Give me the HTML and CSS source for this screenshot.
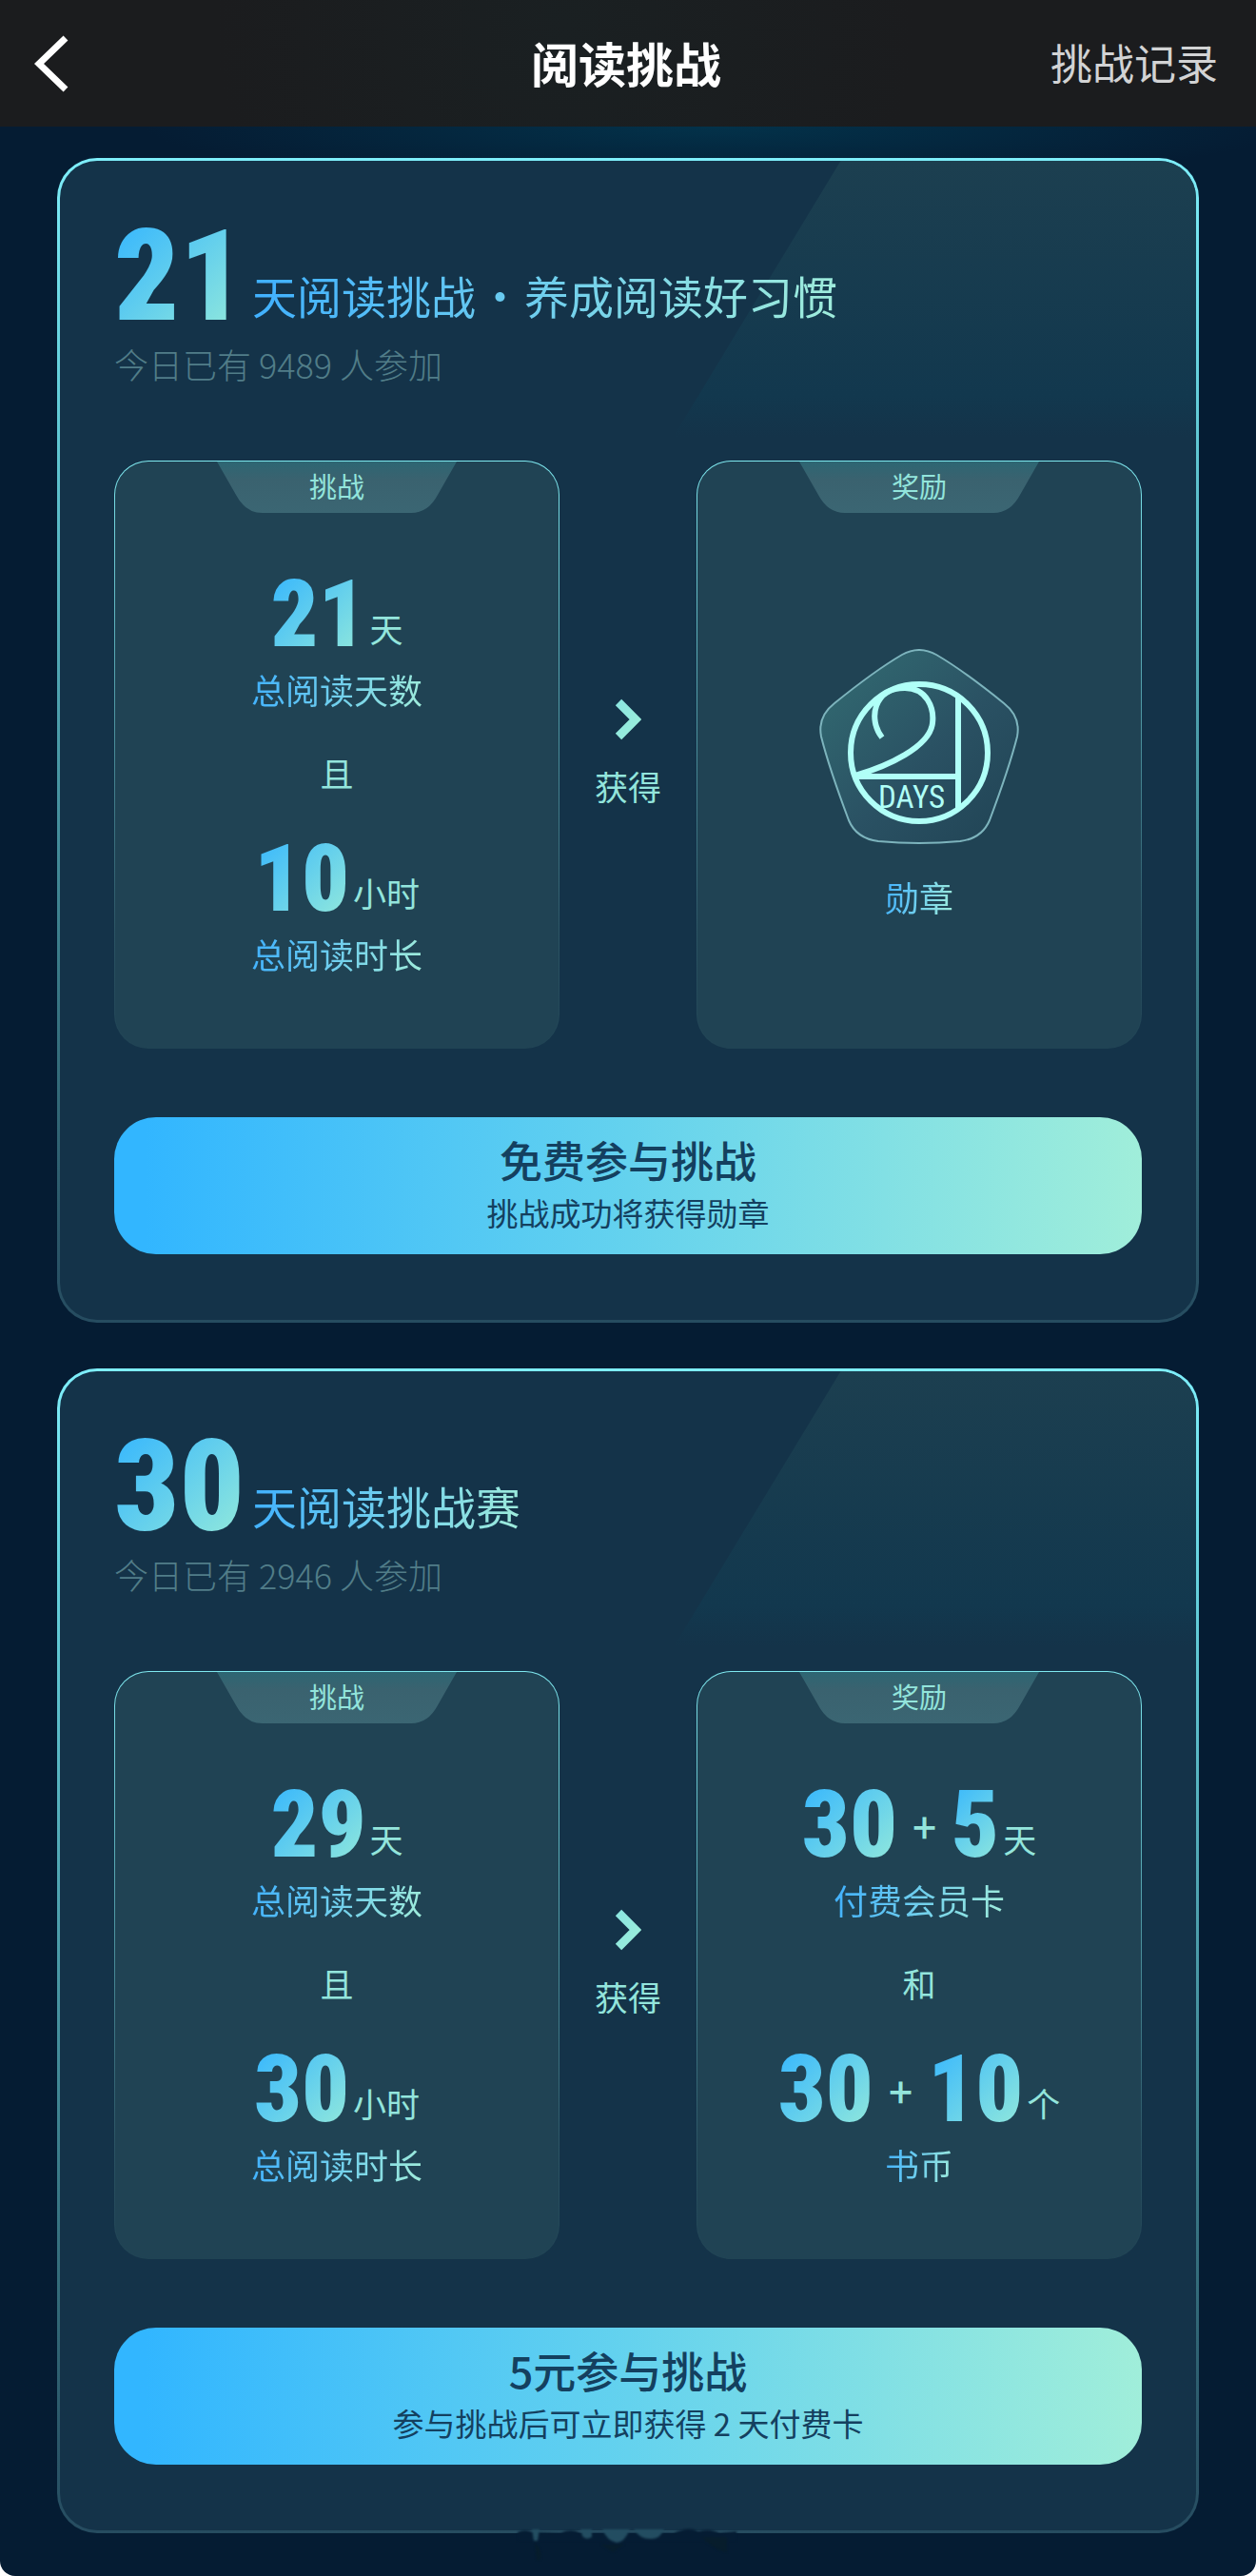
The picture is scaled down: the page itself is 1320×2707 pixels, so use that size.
FILE: index.html
```html
<!DOCTYPE html>
<html lang="zh-CN">
<head>
  <meta charset="UTF-8">
  <meta name="viewport" content="width=device-width, initial-scale=1.0">
  <title>阅读挑战</title>
  <link rel="stylesheet" href="styles.css">
</head>
<body>
  <div class="page">
    <header class="navbar">
      <button class="back" type="button" aria-label="返回">
        <svg width="38" height="62" viewBox="0 0 38 62"><path d="M33 4 L5 31 L33 58" fill="none" stroke="#fff" stroke-width="7"/></svg>
      </button>
      <h1>阅读挑战</h1>
      <a class="record" href="#">挑战记录</a>
    </header>

    <main class="list">
      <section class="card">
        <h2 class="card-title"><span class="num num-lg">21</span><span class="title-text">天阅读挑战<span class="dot">·</span>养成阅读好习惯</span></h2>
        <p class="joined">今日已有 9489 人参加</p>

        <div class="row">
          <div class="box">
            <div class="tab"><svg viewBox="0 0 252 54"><path d="M0 0H252L232 35Q222 54 204 54H48Q30 54 20 35Z" fill="url(#tabFill)"/></svg><span>挑战</span></div>
            <div class="stat"><span class="num">21</span><span class="unit">天</span></div>
            <p class="label"><span>总阅读天数</span></p>
            <p class="and">且</p>
            <div class="stat"><span class="num">10</span><span class="unit">小时</span></div>
            <p class="label"><span>总阅读时长</span></p>
          </div>

          <div class="get">
            <svg width="28" height="44" viewBox="0 0 28 44"><path d="M4 4L22 22L4 40" fill="none" stroke="url(#mint)" stroke-width="9"/></svg>
            <span>获得</span>
          </div>

          <div class="box">
            <div class="tab"><svg viewBox="0 0 252 54"><path d="M0 0H252L232 35Q222 54 204 54H48Q30 54 20 35Z" fill="url(#tabFill)"/></svg><span>奖励</span></div>
            <div class="medal">
              <svg width="210" height="206" viewBox="0 0 210 206">
                <path d="M87 6Q105 -4 123 6C147 20 173 40 194 57Q212 71 208 92C201 120 188 156 179 180Q171 199 148 202Q105 206 62 202Q39 199 31 180C22 156 9 120 2 92Q-2 71 16 57C37 40 63 20 87 6Z" fill="url(#medalFill)" stroke="#7db4bd" stroke-width="2"/>
                <g fill="none" stroke="#b0fff7" stroke-width="6">
                  <circle cx="105" cy="109" r="72"/>
                  <path d="M146 50V168"/>
                  <path d="M38 134H146"/>
                  <path d="M66 93C51 74 57 41 90 41C113 41 121 62 119 78C116 103 72 123 38 133"/>
                </g>
                <text class="days" x="62" y="167">DAYS</text>
              </svg>
              <p class="label"><span>勋章</span></p>
            </div>
          </div>
        </div>

        <button class="join" type="button"><strong>免费参与挑战</strong><small>挑战成功将获得勋章</small></button>
      </section>

      <section class="card">
        <h2 class="card-title"><span class="num num-lg">30</span><span class="title-text">天阅读挑战赛</span></h2>
        <p class="joined">今日已有 2946 人参加</p>

        <div class="row">
          <div class="box">
            <div class="tab"><svg viewBox="0 0 252 54"><path d="M0 0H252L232 35Q222 54 204 54H48Q30 54 20 35Z" fill="url(#tabFill)"/></svg><span>挑战</span></div>
            <div class="stat"><span class="num">29</span><span class="unit">天</span></div>
            <p class="label"><span>总阅读天数</span></p>
            <p class="and">且</p>
            <div class="stat"><span class="num">30</span><span class="unit">小时</span></div>
            <p class="label"><span>总阅读时长</span></p>
          </div>

          <div class="get">
            <svg width="28" height="44" viewBox="0 0 28 44"><path d="M4 4L22 22L4 40" fill="none" stroke="url(#mint)" stroke-width="9"/></svg>
            <span>获得</span>
          </div>

          <div class="box">
            <div class="tab"><svg viewBox="0 0 252 54"><path d="M0 0H252L232 35Q222 54 204 54H48Q30 54 20 35Z" fill="url(#tabFill)"/></svg><span>奖励</span></div>
            <div class="stat"><span class="num">30</span><span class="plus">+</span><span class="num">5</span><span class="unit">天</span></div>
            <p class="label"><span>付费会员卡</span></p>
            <p class="and">和</p>
            <div class="stat"><span class="num">30</span><span class="plus">+</span><span class="num">10</span><span class="unit">个</span></div>
            <p class="label"><span>书币</span></p>
          </div>
        </div>

        <button class="join" type="button"><strong>5元参与挑战</strong><small>参与挑战后可立即获得 2 天付费卡</small></button>
      </section>

      <!-- 底部残影 -->
      <svg class="smudge" width="230" height="50" viewBox="0 0 230 50" aria-hidden="true">
        <path d="M0 11Q8 7 15 11L45 12Q56 6 66 12H164Q180 4 190 10Q202 6 212 12L230 10V20H0Z" fill="#051c33"/>
        <path d="M15 8H23L21 20H17ZM66 8H78V16Q72 20 68 15ZM89 8H118Q112 22 104 22Q94 20 89 8ZM122 8H154Q150 18 140 18Q128 18 122 8Z" fill="#234d61"/>
        <path d="M18 22Q26 28 24 40L20 40ZM88 24H112L100 32ZM194 16H220V32Q206 30 194 16Z" fill="#071d2c"/>
      </svg>
    </main>
  </div>

  <!-- 公用渐变 -->
  <svg class="defs" width="0" height="0" aria-hidden="true">
    <defs>
      <linearGradient id="tabFill" x1="0" y1="0" x2="0" y2="1"><stop offset="0" stop-color="#2d6673"/><stop offset=".35" stop-color="#3a626f"/><stop offset="1" stop-color="#3b6673"/></linearGradient>
      <linearGradient id="mint" x1="0" y1="0" x2="1" y2="1"><stop offset="0" stop-color="#8ce6e0"/><stop offset="1" stop-color="#9aeedb"/></linearGradient>
      <linearGradient id="medalFill" x1="0" y1="0" x2="1" y2="1"><stop offset="0" stop-color="#336d73"/><stop offset=".55" stop-color="#2a5163"/><stop offset="1" stop-color="#204354"/></linearGradient>
    </defs>
  </svg>
</body>
</html>
```

FILE: styles.css
```css
* { box-sizing: border-box; margin: 0; padding: 0; }
html { background: #fff; }
body { font-family: "Noto Sans CJK SC", sans-serif; font-size: 35px; line-height: 40px; color: #93e5dc; }
button { border: 0; background: none; font-family: inherit; cursor: pointer; }
p, h1, h2 { font-weight: 400; }

.page { background: #051c33; border-radius: 0 0 16px 16px; overflow: hidden; }

/* 顶部导航 */
.navbar { display: grid; grid-template-columns: 1fr auto 1fr; align-items: center; height: 133px; padding: 0 40px 0 36px; background: radial-gradient(circle at 45% 20%, #1a2022, #1b1c1e 50%); }
.back { display: flex; justify-self: start; }
.navbar h1 { padding-bottom: 4px; font-size: 50px; line-height: 60px; font-weight: 700; color: #fff; }
.record { justify-self: end; padding-bottom: 4px; font-size: 44px; line-height: 60px; color: #d2d3d4; text-decoration: none; }

.list { position: relative; display: flex; flex-direction: column; gap: 48px; padding: 33px 60px 45px; background: radial-gradient(ellipse 600px 60px at 57% 0, #03324a, transparent); }

/* 挑战卡片 */
.card { position: relative; padding: 57px 57px 69px; border: 3px solid transparent; border-radius: 42px; background: linear-gradient(#143349, #143349) padding-box, linear-gradient(#7eeefa, #64cfdb 20%, #36717f 75%, #264c60) border-box; }
.card::before { content: ""; position: absolute; top: 0; right: 0; width: 46%; height: 290px; border-radius: 0 39px 0 0; clip-path: polygon(32% 0, 100% 0, 100% 100%, 0 100%); background: linear-gradient(#1c3f50, #12384e 85%, #143349); }
.card > * { position: relative; }

.num { font-family: "Liberation Sans Narrow", "Roboto Condensed", "Liberation Sans", sans-serif; font-size: 98px; line-height: 100px; font-weight: 900; }
.num-lg { font-size: 134px; line-height: 130px; }
.num, .title-text, .label span { color: transparent; background: linear-gradient(135deg, #32b4ff, #98ecd9); background-clip: text; -webkit-background-clip: text; }
.title-text, .label span { background-image: linear-gradient(100deg, #3fb0ff, #a0eddb); }

.card-title { display: flex; align-items: flex-end; gap: 8px; height: 130px; }
.title-text { padding-bottom: 16px; font-size: 47px; line-height: 60px; }
.dot { margin: 0 2px; }
.joined { margin-top: 6px; font-size: 36px; color: #517d88; font-weight: 300; }

.row { display: flex; align-items: stretch; margin: 82px 0 72px; }
.box { flex: 1; height: 618px; border: 1px solid transparent; border-radius: 36px; text-align: center; background: linear-gradient(#204354, #204354) padding-box, linear-gradient(#7fe9f0, #5cb0bb 30%, #2c5565 80%, #204354) border-box; }
.tab { display: grid; width: 252px; height: 54px; margin: 0 auto; font-size: 29px; line-height: 50px; }
.tab svg, .tab span { grid-area: 1 / 1; }
.tab svg { width: 252px; height: 54px; }
.stat { display: flex; justify-content: center; align-items: flex-end; gap: 4px; height: 100px; margin-top: 57px; }
.unit { padding-bottom: 16px; }
.plus { align-self: center; margin: 0 12px; font-size: 44px; font-weight: 500; }
.label { margin-top: 8px; font-size: 36px; }
.and { margin-top: 48px; }
.and + .stat { margin-top: 42px; }

.get { display: flex; flex-direction: column; align-items: center; justify-content: center; gap: 28px; width: 144px; padding-bottom: 6px; }
.get svg, .medal svg { display: block; }
.medal { display: flex; flex-direction: column; align-items: center; padding-top: 143px; }
.medal .label { margin-top: 34px; }
.days { font-family: "Roboto Condensed", "Liberation Sans Narrow", sans-serif; font-size: 33px; fill: #b0fff7; }

.join { display: flex; flex-direction: column; align-items: center; justify-content: center; gap: 8px; width: 100%; height: 144px; padding-bottom: 6px; border-radius: 44px; color: #14405f; background: linear-gradient(90deg, #32b6ff 3%, #64d2ee 50%, #a0eeda); }
.join strong { font-size: 45px; line-height: 54px; font-weight: 500; }
.join small { font-size: 33px; line-height: 40px; }

/* 盖在卡片下边框上 */
.smudge { position: absolute; left: 50%; bottom: 7px; margin-left: -116px; filter: blur(1px); }
.defs { position: absolute; }
```
